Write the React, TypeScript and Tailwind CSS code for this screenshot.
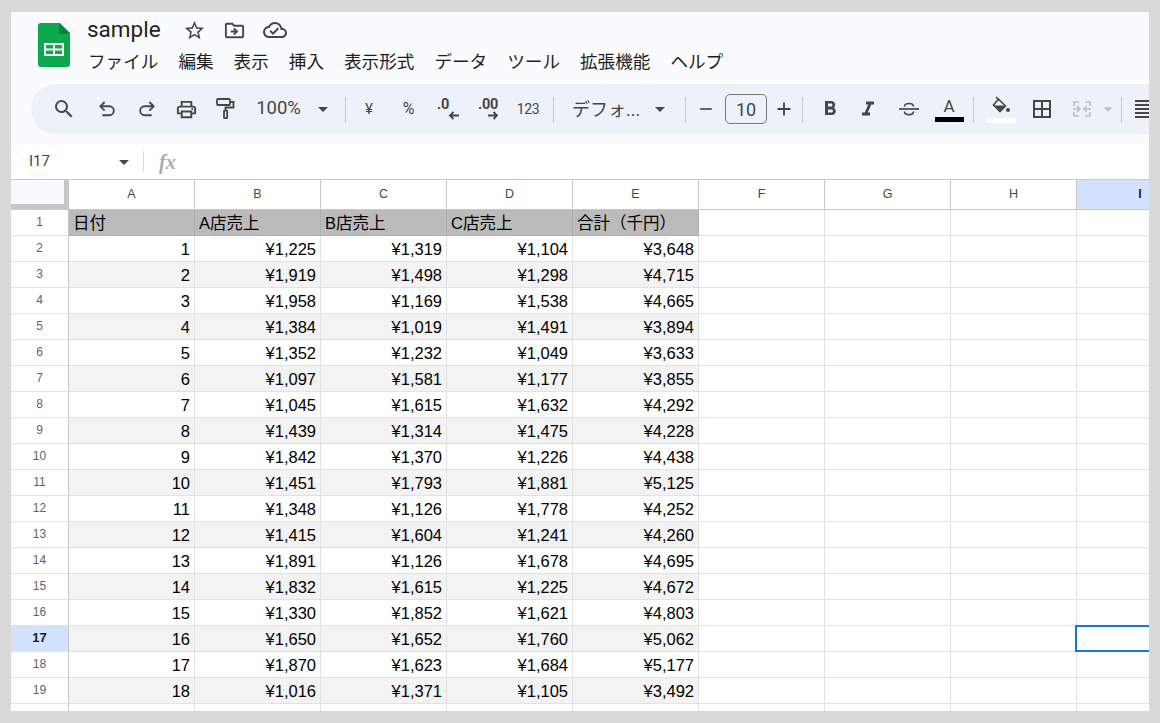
import React from 'react';
import {
  MdOutlineStarBorder,
  MdOutlineDriveFileMove,
  MdOutlineCloudDone,
  MdSearch,
  MdOutlinePrint,
  MdArrowDropDown,
  MdAdd,
  MdRemove,
  MdFormatBold,
  MdFormatItalic,
  MdBorderAll,
  MdOutlineFormatAlignJustify,
} from 'react-icons/md';

const rows = [
  [1, '¥1,225', '¥1,319', '¥1,104', '¥3,648'],
  [2, '¥1,919', '¥1,498', '¥1,298', '¥4,715'],
  [3, '¥1,958', '¥1,169', '¥1,538', '¥4,665'],
  [4, '¥1,384', '¥1,019', '¥1,491', '¥3,894'],
  [5, '¥1,352', '¥1,232', '¥1,049', '¥3,633'],
  [6, '¥1,097', '¥1,581', '¥1,177', '¥3,855'],
  [7, '¥1,045', '¥1,615', '¥1,632', '¥4,292'],
  [8, '¥1,439', '¥1,314', '¥1,475', '¥4,228'],
  [9, '¥1,842', '¥1,370', '¥1,226', '¥4,438'],
  [10, '¥1,451', '¥1,793', '¥1,881', '¥5,125'],
  [11, '¥1,348', '¥1,126', '¥1,778', '¥4,252'],
  [12, '¥1,415', '¥1,604', '¥1,241', '¥4,260'],
  [13, '¥1,891', '¥1,126', '¥1,678', '¥4,695'],
  [14, '¥1,832', '¥1,615', '¥1,225', '¥4,672'],
  [15, '¥1,330', '¥1,852', '¥1,621', '¥4,803'],
  [16, '¥1,650', '¥1,652', '¥1,760', '¥5,062'],
  [17, '¥1,870', '¥1,623', '¥1,684', '¥5,177'],
  [18, '¥1,016', '¥1,371', '¥1,105', '¥3,492'],
];

const titles = ['日付', 'A店売上', 'B店売上', 'C店売上', '合計（千円）'];
const menus = ['ファイル', '編集', '表示', '挿入', '表示形式', 'データ', 'ツール', '拡張機能', 'ヘルプ'];
const letters = ['A', 'B', 'C', 'D', 'E', 'F', 'G', 'H'];
const sans = 'font-["Roboto","Noto_Sans_CJK_JP",sans-serif]';

function SheetsLogo() {
  return (
    <svg width="32" height="44" viewBox="0 0 32 44">
      <path d="M3 0h19l10 10v31a3 3 0 0 1-3 3H3a3 3 0 0 1-3-3V3a3 3 0 0 1 3-3z" fill="#0da84e" />
      <path d="M21 0l11 11H21z" fill="#0b8043" />
      <path d="M6 20h20v13H6z" fill="#fff" />
      <path d="M8 22h7v3.5H8zM17 22h7v3.5h-7zM8 27.5h7V31H8zM17 27.5h7V31h-7z" fill="#0da84e" />
    </svg>
  );
}

function Slot({ w = 'w-[40px]', children }: { w?: string; children?: React.ReactNode }) {
  return <div className={`flex h-full shrink-0 items-center justify-center text-[#444746] ${w}`}>{children}</div>;
}

function Sep() {
  return <div className="mx-[1px] h-[25px] w-px shrink-0 bg-[#c7c7c7]" />;
}

function Undo({ flip }: { flip?: boolean }) {
  return (
    <svg width="23" height="23" viewBox="0 0 20 20" fill="none" stroke="#444746" strokeWidth="1.6" className={flip ? '-scale-x-100' : ''}>
      <path d="M7.5 3.5 3.8 7.2l3.7 3.7" />
      <path d="M4 7.2h7.6a3.9 3.9 0 0 1 0 7.8H5.5" />
    </svg>
  );
}

function PaintRoller() {
  return (
    <svg width="19" height="22" viewBox="0 0 19 22" fill="none" stroke="#444746" strokeWidth="1.8">
      <rect x="1" y="1" width="13" height="6" rx="1" />
      <path d="M14 4h3.5v5.5H9.5v3.2" />
      <rect x="8" y="12.7" width="3.2" height="7.5" rx="0.5" />
    </svg>
  );
}

function StrikeIcon() {
  return (
    <svg width="22" height="22" viewBox="0 0 22 22" fill="none" stroke="#444746" strokeWidth="1.7">
      <path d="M1 11h20" />
      <path d="M6.5 8.5c0-4 9-4 9 0M6.5 13.5c0 4.2 9 4.2 9 0" />
    </svg>
  );
}

function FillIcon() {
  return (
    <svg width="20" height="18" viewBox="0 0 20 18" fill="none" stroke="#444746" strokeWidth="1.6">
      <path d="M4 1l3 3" />
      <path d="M6.5 3.2 13.5 10 8 15.5 1.5 9z" />
      <path d="M2 9.5h11L8 15z" fill="#444746" stroke="none" />
      <circle cx="16" cy="14" r="2" fill="#444746" stroke="none" />
    </svg>
  );
}

function DecimalIcon({ label, back }: { label: string; back?: boolean }) {
  return (
    <div className="relative h-[24px] w-[26px] text-[#444746]">
      <span className={`absolute top-[-1px] w-full text-center font-['Roboto',sans-serif] text-[14.5px] leading-[18px] font-bold tracking-[-0.3px] ${back ? '-left-[5px]' : 'left-0'}`}>{label}</span>
      <svg width="12" height="9" viewBox="0 0 12 9" fill="none" stroke="#444746" strokeWidth="1.8" className={`absolute top-[14px] ${back ? 'left-[13px]' : 'left-[12px] -scale-x-100'}`}>
        <path d="M11 4.5H2M5.5 1 2 4.5 5.5 8" />
      </svg>
    </div>
  );
}

function MergeIcon() {
  return (
    <svg width="22" height="22" viewBox="0 0 22 22" fill="none" stroke="#bdc1c6" strokeWidth="1.7">
      <path d="M8 4H3v4M3 14v4h5M14 4h5v4M19 14v4h-5" />
      <path d="M2 11h7M6 8l3 3-3 3M20 11h-7M16 8l-3 3 3 3" />
    </svg>
  );
}

function Toolbar() {
  return (
    <div className="ml-5 flex h-[50px] w-[1200px] items-center rounded-l-[25px] bg-[#edf2fa] pl-[13px]">
      <Slot><MdSearch size={24} /></Slot>
      <Slot w="w-[3px]" />
      <Slot><Undo /></Slot>
      <Slot w="w-[39px]"><Undo flip /></Slot>
      <Slot><MdOutlinePrint size={23} /></Slot>
      <Slot w="w-[39px]"><PaintRoller /></Slot>
      <div className={`ml-[10px] flex w-[47px] shrink-0 justify-center text-[18.5px] text-[#444746] ${sans}`}>100%</div>
      <Slot w="w-[42px]"><MdArrowDropDown size={24} /></Slot>
      <Sep />
      <Slot w="w-[44px]"><span className={`text-[15px] ${sans}`}>¥</span></Slot>
      <Slot w="w-[35px]"><span className={`text-[16px] ${sans}`}>%</span></Slot>
      <Slot w="w-[44px]"><DecimalIcon label=".0" back /></Slot>
      <Slot w="w-[36px]"><DecimalIcon label=".00" /></Slot>
      <Slot w="w-[44px]"><span className={`text-[14px] tracking-[-0.3px] ${sans}`}>123</span></Slot>
      <div className="w-[2px] shrink-0" />
      <Sep />
      <div className={`ml-[17px] w-[72px] shrink-0 text-[18px] whitespace-nowrap text-[#444746] ${sans}`}>デフォ...</div>
      <Slot w="w-[32px]"><MdArrowDropDown size={24} /></Slot>
      <div className="w-[8px] shrink-0" />
      <Sep />
      <Slot w="w-[38px]"><MdRemove size={20} /></Slot>
      <div className={`flex h-[30px] w-[42px] shrink-0 items-center justify-center rounded-[5px] border border-[#747775] text-[18px] text-[#444746] ${sans}`}>10</div>
      <Slot w="w-[34px]"><MdAdd size={22} /></Slot>
      <Sep />
      <Slot w="w-[52px]"><MdFormatBold size={24} /></Slot>
      <Slot w="w-[24px]"><MdFormatItalic size={25} /></Slot>
      <Slot w="w-[57px]"><StrikeIcon /></Slot>
      <div className="flex h-full w-[24px] shrink-0 flex-col items-center justify-center">
        <span className={`text-[17px] leading-[18px] text-[#444746] ${sans}`}>A</span>
        <div className="mt-[2px] h-[5px] w-[29px] shrink-0 bg-black" />
      </div>
      <div className="w-[11px] shrink-0" />
      <Sep />
      <div className="ml-[12px] flex h-full w-[29px] shrink-0 flex-col items-center justify-center">
        <FillIcon />
        <div className="mt-[4px] h-[5px] w-[29px] shrink-0 bg-white" />
      </div>
      <Slot w="w-[52px]"><MdBorderAll size={24} /></Slot>
      <Slot w="w-[28px]"><MergeIcon /></Slot>
      <div className="ml-[1px] w-[20px] shrink-0 text-[#bdc1c6]"><MdArrowDropDown size={22} /></div>
      <div className="w-[3px] shrink-0" />
      <Sep />
      <Slot w="w-[41px]"><MdOutlineFormatAlignJustify size={24} /></Slot>
    </div>
  );
}

function RowNum({ n }: { n: number }) {
  const on = n === 17;
  return (
    <div className={`flex w-[58px] shrink-0 items-center justify-center border-r border-b border-r-[#c7c7c7] border-b-[#e2e2e2] pb-[2px] ${on ? 'bg-[#d3e3fd] text-[13px] font-bold text-[#0b1f3f]' : 'text-[12px] text-[#5f6368]'}`}>
      {n}
    </div>
  );
}

function EmptyCells({ selected, count = 4 }: { selected?: boolean; count?: number }) {
  return (
    <>
      {Array.from({ length: count }).map((_, i) => (
        <div key={i} className={`w-[126px] shrink-0 border-r border-b border-[#e2e2e2] ${selected && i === 3 ? 'relative' : ''}`}>
          {selected && i === 3 && <div className="absolute -top-[1px] -left-[2px] h-[27px] w-[130px] border-2 border-[#1a73e8]" />}
        </div>
      ))}
    </>
  );
}

export default function App() {
  return (
    <div className="h-[723px] w-[1160px] overflow-hidden bg-[#d9d9d9] px-[11px] py-[12px]">
      <div className="h-full w-full overflow-hidden bg-white">
        <div className="h-[132px] bg-[#f9fbfd]">
          <div className="flex h-[72px]">
            <div className="ml-[27px] pt-[11px]"><SheetsLogo /></div>
            <div className="ml-[17px] flex flex-col">
              <div className="flex h-[36px] items-center text-[#444746]">
                <span className={`w-[96px] text-[22.5px] text-[#1f1f1f] ${sans}`}>sample</span>
                <MdOutlineStarBorder size={23} />
                <MdOutlineDriveFileMove size={23} className="ml-[17px]" />
                <MdOutlineCloudDone size={24} className="ml-[17px]" />
              </div>
              <div className="flex gap-[20px] pl-[1px] font-['Noto_Sans_CJK_JP',sans-serif] text-[17.6px] leading-[26px] text-[#1f1f1f]">
                {menus.map((m) => <span key={m}>{m}</span>)}
              </div>
            </div>
          </div>
          <Toolbar />
        </div>

        <div className="flex h-[36px] items-center border-b border-[#c7c7c7] bg-white">
          <span className={`ml-[18px] w-[83px] text-[15px] text-[#444746] ${sans}`}>I17</span>
          <MdArrowDropDown size={24} className="text-[#444746]" />
          <div className="ml-[7px] h-[21px] w-px bg-[#dadce0]" />
          <span className="ml-[15px] font-['Liberation_Serif',serif] text-[20px] font-bold text-[#a9abad] italic">fx</span>
        </div>

        <div className="font-['Liberation_Sans','Noto_Sans_CJK_JP',sans-serif]">
          <div className="flex h-[30px] border-b border-[#c7c7c7]">
            <div className="h-full w-[58px] shrink-0 border-r border-[#c7c7c7] bg-[#c7c7c7]">
              <div className="h-[24px] w-[53px] bg-[#f8f9fa]" />
            </div>
            {letters.map((c) => (
              <div key={c} className="flex w-[126px] shrink-0 items-center justify-center border-r border-[#c7c7c7] text-[12.5px] text-[#444746]">
                {c}
              </div>
            ))}
            <div className="flex w-[126px] shrink-0 items-center justify-center bg-[#d3e3fd] text-[12.5px] font-bold text-[#0b1f3f]">I</div>
          </div>

          <div className="flex h-[26px]">
            <RowNum n={1} />
            {titles.map((t) => (
              <div key={t} className="flex w-[126px] shrink-0 items-center border-r border-b border-[#adadad] bg-[#bbbbbb] pt-[1px] pl-[4px] text-[16.5px] whitespace-nowrap text-black">
                {t}
              </div>
            ))}
            <EmptyCells />
          </div>

          {rows.map((r, i) => (
            <div key={i} className="flex h-[26px]">
              <RowNum n={i + 2} />
              {r.map((v, j) => (
                <div key={j} className={`flex w-[126px] shrink-0 items-center justify-end border-r border-b border-[#e2e2e2] pt-[2px] pr-[4px] text-[16.5px] text-black ${i % 2 === 1 ? 'bg-[#f3f3f3]' : 'bg-white'}`}>
                  {v}
                </div>
              ))}
              <EmptyCells selected={i === 15} />
            </div>
          ))}

          <div className="flex h-[26px]">
            <RowNum n={20} />
            <EmptyCells count={5} />
            <EmptyCells />
          </div>
        </div>
      </div>
    </div>
  );
}
